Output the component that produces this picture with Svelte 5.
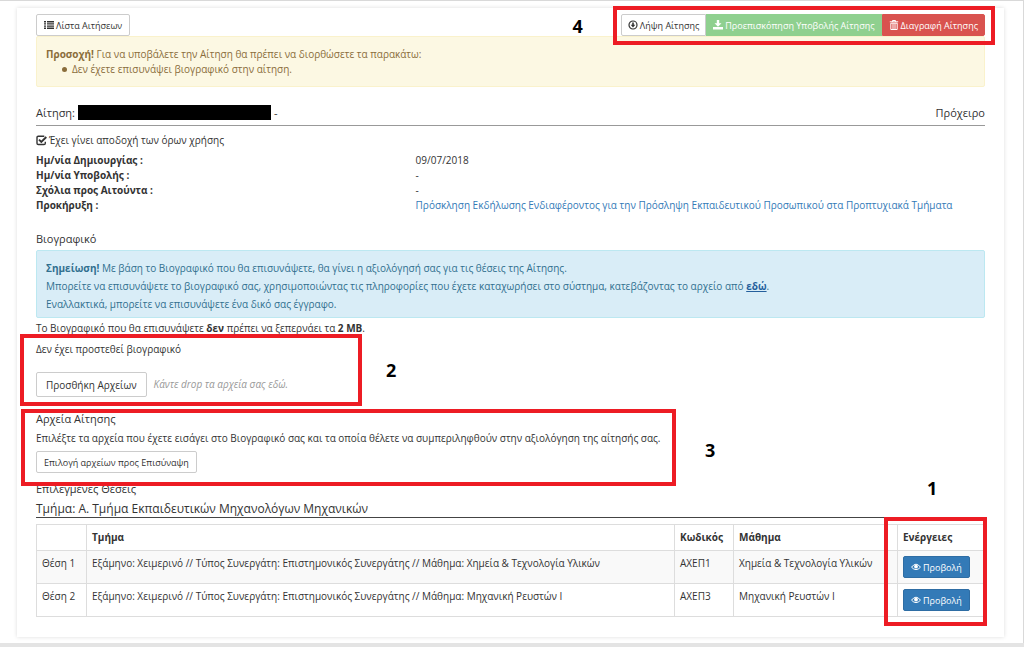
<script>
    const details = [
        { label: "Ημ/νία Δημιουργίας :", value: "09/07/2018" },
        { label: "Ημ/νία Υποβολής :", value: "-" },
        { label: "Σχόλια προς Αιτούντα :", value: "-" },
        {
            label: "Προκήρυξη :",
            value: "Πρόσκληση Εκδήλωσης Ενδιαφέροντος για την Πρόσληψη Εκπαιδευτικού Προσωπικού στα Προπτυχιακά Τμήματα",
            link: true
        }
    ];

    const positions = [
        {
            name: "Θέση 1",
            department: "Εξάμηνο: Χειμερινό // Τύπος Συνεργάτη: Επιστημονικός Συνεργάτης // Μάθημα: Χημεία & Τεχνολογία Υλικών",
            code: "ΑΧΕΠ1",
            course: "Χημεία & Τεχνολογία Υλικών"
        },
        {
            name: "Θέση 2",
            department: "Εξάμηνο: Χειμερινό // Τύπος Συνεργάτη: Επιστημονικός Συνεργάτης // Μάθημα: Μηχανική Ρευστών Ι",
            code: "ΑΧΕΠ3",
            course: "Μηχανική Ρευστών Ι"
        }
    ];
</script>

<div class="page">
    <main class="card">
        <div class="toolbar">
            <button type="button" class="btn">
                <svg class="icon" viewBox="0 0 10 10"><path d="M0 1h2v1.4H0zM3 1h7v1.4H3zM0 3.2h2v1.4H0zM3 3.2h7v1.4H3zM0 5.4h2v1.4H0zM3 5.4h7v1.4H3zM0 7.6h2V9H0zM3 7.6h7V9H3z" /></svg>
                Λίστα Αιτήσεων
            </button>
            <div class="group">
                <button type="button" class="btn">
                    <svg class="icon" viewBox="0 0 10 10"><circle cx="5" cy="5" r="4" fill="none" stroke="currentColor" stroke-width="1.2" /><path d="M4.2 2.4h1.6v2.4h1.5L5 7.5 2.7 4.8h1.5z" /></svg>
                    Λήψη Αίτησης
                </button>
                <button type="button" class="btn success">
                    <svg class="icon" viewBox="0 0 10 10"><path d="M3.8 0h2.4v3.3h2.3L5 6.8 1.5 3.3h2.3zM0 7h10v2.5H0z" /></svg>
                    Προεπισκόπηση Υποβολής Αίτησης
                </button>
                <button type="button" class="btn danger">
                    <svg class="icon" viewBox="0 0 10 10"><path fill="none" stroke="currentColor" d="M.8 1.8h8.4M3.5 1.8V.5h3v1.3M1.8 3.2v6.3h6.4V3.2zM4 3.5v5.5M6 3.5v5.5" /></svg>
                    Διαγραφή Αίτησης
                </button>
                <div class="frame"><span class="number before">4</span></div>
            </div>
        </div>

        <div class="alert warning">
            <strong>Προσοχή!</strong> Για να υποβάλετε την Αίτηση θα πρέπει να διορθώσετε τα παρακάτω:
            <ul>
                <li>Δεν έχετε επισυνάψει βιογραφικό στην αίτηση.</li>
            </ul>
        </div>

        <header class="title">
            <span>Αίτηση:</span>
            <span class="redacted"></span>
            <span>-</span>
            <span class="status">Πρόχειρο</span>
        </header>

        <p class="terms">
            <svg class="icon" viewBox="0 0 11 11"><path fill="none" stroke="currentColor" stroke-width="1.4" d="M8.3 1.2H2.3Q1 1.2 1 2.5v5.7q0 1.3 1.3 1.3H8q1.3 0 1.3-1.3V6.7" /><path fill="none" stroke="currentColor" stroke-width="1.9" d="M3 4.6l2.3 2.3L10.3 2" /></svg>
            Έχει γίνει αποδοχή των όρων χρήσης
        </p>

        <dl>
            {#each details as item}
                <dt>{item.label}</dt>
                <dd>
                    {#if item.link}
                        <a href="#call">{item.value}</a>
                    {:else}
                        {item.value}
                    {/if}
                </dd>
            {/each}
        </dl>

        <h2 class="cv-title">Βιογραφικό</h2>
        <div class="alert info">
            <strong>Σημείωση!</strong> Με βάση το Βιογραφικό που θα επισυνάψετε, θα γίνει η αξιολόγησή σας για τις θέσεις της Αίτησης.<br />
            Μπορείτε να επισυνάψετε το βιογραφικό σας, χρησιμοποιώντας τις πληροφορίες που έχετε καταχωρήσει στο σύστημα, κατεβάζοντας το αρχείο από <a href="#cv">εδώ</a>.<br />
            Εναλλακτικά, μπορείτε να επισυνάψετε ένα δικό σας έγγραφο.
        </div>
        <p class="limit">Το Βιογραφικό που θα επισυνάψετε <strong>δεν</strong> πρέπει να ξεπερνάει τα <strong>2 MB</strong>.</p>

        <section class="upload">
            <p>Δεν έχει προστεθεί βιογραφικό</p>
            <div class="drop">
                <button type="button" class="btn large">Προσθήκη Αρχείων</button>
                <em>Κάντε drop τα αρχεία σας εδώ.</em>
            </div>
            <div class="frame"><span class="number after">2</span></div>
        </section>

        <section class="files">
            <h2>Αρχεία Αίτησης</h2>
            <p>Επιλέξτε τα αρχεία που έχετε εισάγει στο Βιογραφικό σας και τα οποία θέλετε να συμπεριληφθούν στην αξιολόγηση της αίτησής σας.</p>
            <button type="button" class="btn">Επιλογή αρχείων προς Επισύναψη</button>
            <div class="frame"><span class="number after">3</span></div>
        </section>

        <h2 class="selected">Επιλεγμένες Θέσεις</h2>
        <h3>Τμήμα: Α. Τμήμα Εκπαιδευτικών Μηχανολόγων Μηχανικών</h3>

        <div class="positions">
            <table>
                <colgroup>
                    <col class="col-name" />
                    <col />
                    <col class="col-code" />
                    <col class="col-course" />
                    <col class="col-actions" />
                </colgroup>
                <thead>
                    <tr>
                        <th></th>
                        <th>Τμήμα</th>
                        <th>Κωδικός</th>
                        <th>Μάθημα</th>
                        <th>Ενέργειες</th>
                    </tr>
                </thead>
                <tbody>
                    {#each positions as position}
                        <tr>
                            <td>{position.name}</td>
                            <td>{position.department}</td>
                            <td>{position.code}</td>
                            <td>{position.course}</td>
                            <td>
                                <button type="button" class="btn primary">
                                    <svg class="icon" viewBox="0 0 10 10"><path fill="none" stroke="currentColor" d="M.5 5.2Q5-.8 9.5 5.2 5 10 .5 5.2z" /><circle cx="5" cy="4.6" r="1.9" /></svg>
                                    Προβολή
                                </button>
                            </td>
                        </tr>
                    {/each}
                </tbody>
            </table>
            <div class="frame"><span class="number above">1</span></div>
        </div>
    </main>
</div>

<style>
    :global(body) {
        background: #e4e4e4;
    }

    .page {
        box-sizing: border-box;
        padding: 7px 19px 6px 17px;
        border-top: 1px solid #d9d9d9;
        border-right: 1px solid #d9d9d9;
        background: #fff;
        color: #333;
        font-family: "Open Sans", "Noto Sans", sans-serif;
        font-size: 10px;
        line-height: 15px;
    }

    .card {
        padding: 6px 19px 20px;
        background: #fff;
        box-shadow: 0 0 4px rgba(0, 0, 0, 0.14);
    }

    p, h2, h3, dl, dd, ul {
        margin: 0;
        padding: 0;
    }

    h2 {
        font-size: 11px;
        font-weight: 400;
    }

    .toolbar {
        display: flex;
        justify-content: space-between;
    }

    .group {
        display: flex;
        position: relative;
    }

    .btn {
        display: inline-flex;
        align-items: center;
        justify-content: center;
        gap: 2px;
        box-sizing: border-box;
        height: 22px;
        padding: 0 7px;
        border: 1px solid #ccc;
        border-radius: 2px;
        background: #fff;
        color: #333;
        font-family: inherit;
        font-size: 9px;
        white-space: nowrap;
        cursor: pointer;
    }

    .icon {
        flex: none;
        width: 10px;
        height: 10px;
        fill: currentColor;
    }

    .group .btn {
        padding: 0 6px;
        border-radius: 0;
    }

    .group .btn:first-child {
        border-radius: 2px 0 0 2px;
    }

    .group .danger {
        border-radius: 0 2px 2px 0;
    }

    .success {
        border-color: #8fd08f;
        background: #8fd08f;
        color: #fff;
        font-weight: 500;
    }

    .danger {
        border-color: #d9534f;
        background: #d9534f;
        color: #fff;
        font-weight: 500;
    }

    .primary {
        border-color: #2e6da4;
        background: #337ab7;
        color: #fff;
        font-weight: 500;
    }

    .large {
        height: 25px;
        padding: 0 9px;
        font-size: 10px;
    }

    .alert {
        padding: 10px 9px;
        border: 1px solid;
        border-radius: 2px;
    }

    .warning {
        margin-bottom: 18px;
        border-color: #faf2cc;
        background: #fcf8e3;
        color: #8a6d3b;
    }

    .warning ul {
        padding-left: 16px;
        line-height: 14px;
        list-style: none;
    }

    .warning li {
        display: flex;
        align-items: center;
        gap: 5px;
    }

    .warning li::before {
        content: "";
        width: 5px;
        height: 5px;
        border-radius: 50%;
        background: currentColor;
    }

    .title {
        display: flex;
        align-items: flex-start;
        gap: 3px;
        height: 20px;
        border-bottom: 1px solid #999;
        font-size: 11px;
    }

    .redacted {
        width: 193px;
        height: 15px;
        background: #000;
    }

    .status {
        margin-left: auto;
    }

    .terms {
        display: flex;
        align-items: center;
        gap: 2px;
        margin-top: 7px;
    }

    .terms .icon {
        width: 11px;
        height: 11px;
    }

    dl {
        display: grid;
        grid-template-columns: 2fr 3fr;
        margin-top: 5px;
    }

    dt {
        font-weight: 700;
    }

    a {
        color: #337ab7;
        text-decoration: none;
    }

    .cv-title {
        margin: 18px 0 4px;
    }

    .info {
        padding: 8px 9px 4px;
        border-color: #bce8f1;
        background: #d9edf7;
        color: #31708f;
        line-height: 18px;
    }

    .info a {
        color: #245f9c;
        font-weight: 700;
        text-decoration: underline;
    }

    .limit {
        margin-top: 3px;
    }

    section {
        position: relative;
    }

    .upload {
        margin-top: 6px;
    }

    .drop {
        display: flex;
        align-items: center;
        gap: 7px;
        margin-top: 15px;
    }

    .drop em {
        color: #999;
    }

    .files {
        margin-top: 14px;
    }

    .files p {
        margin: 5px 0;
    }

    .files .btn {
        display: flex;
    }

    .selected {
        margin-top: 8px;
    }

    h3 {
        margin-top: 4px;
        border-bottom: 1px solid #444;
        font-size: 12px;
        font-weight: 400;
        line-height: 17px;
    }

    .positions {
        position: relative;
        margin-top: 6px;
    }

    table {
        width: 100%;
        table-layout: fixed;
        border-collapse: collapse;
    }

    .col-name {
        width: 50px;
    }

    .col-code {
        width: 59px;
    }

    .col-course {
        width: 164px;
    }

    .col-actions {
        width: 87px;
    }

    th, td {
        padding: 5px;
        border: 1px solid #ddd;
        text-align: left;
        vertical-align: top;
        white-space: nowrap;
    }

    tbody tr:nth-child(odd) {
        background: #f9f9f9;
    }

    td .btn {
        display: flex;
    }

    .frame {
        position: absolute;
        border: 4px solid #ed1c24;
        pointer-events: none;
    }

    .group .frame {
        inset: -8px -10px -9px -8px;
    }

    .upload .frame {
        top: -8px;
        bottom: -9px;
        left: -16px;
        width: 334px;
    }

    .files .frame {
        top: -2px;
        bottom: -13px;
        left: -15px;
        width: 647px;
    }

    .positions .frame {
        top: -7px;
        right: -2px;
        bottom: -9px;
        width: 95px;
    }

    .number {
        position: absolute;
        top: 50%;
        color: #000;
        font-size: 18px;
        font-weight: 700;
        line-height: 20px;
        transform: translateY(-50%);
    }

    .before {
        right: calc(100% + 34px);
    }

    .after {
        left: calc(100% + 28px);
    }

    .files .after {
        top: 54%;
        left: calc(100% + 33px);
    }

    .above {
        top: -33px;
        left: 39px;
    }
</style>
